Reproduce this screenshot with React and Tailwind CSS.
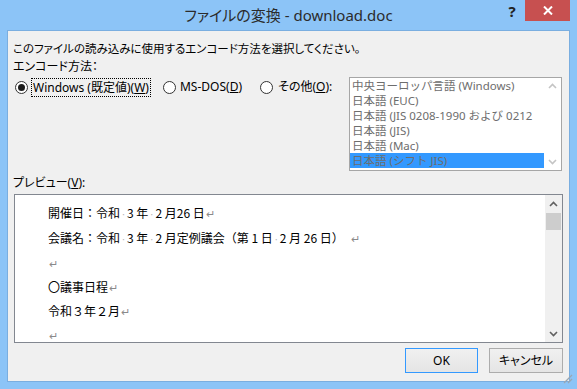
import React from "react";

const Chevron = ({ up, color = "#c4c4c4" }) => (
  <svg width="9" height="6" viewBox="0 0 9 6">
    <path d={up ? "M1 5 L4.5 1.5 L8 5" : "M1 1 L4.5 4.5 L8 1"} fill="none" stroke={color} strokeWidth="1.6" />
  </svg>
);

const Radio = ({ checked }) => (
  <div className="w-[13px] h-[13px] rounded-full border border-[#333333] bg-white flex items-center justify-center shrink-0">
    {checked && <div className="w-[7px] h-[7px] rounded-full bg-[#1c1c1c]" />}
  </div>
);

const Ret = () => <span className="text-[#8a8a8a] text-[11px] ml-[1px]">↵</span>;
const Sp = () => <span className="inline-block w-[7px] text-center text-[#b0b0b0] text-[9px]">·</span>;

const listItems = [
  "中央ヨーロッパ言語 (Windows)",
  "日本語 (EUC)",
  "日本語 (JIS 0208-1990 および 0212",
  "日本語 (JIS)",
  "日本語 (Mac)",
  "日本語 (シフト JIS)",
];

export default function App() {
  return (
    <div className="w-[577px] h-[389px] bg-[#8cc4f7] flex flex-col relative overflow-hidden font-['Noto_Sans','Noto_Sans_CJK_JP',sans-serif] text-black">
      {/* title bar */}
      <div className="h-[30px] grid grid-cols-[1fr_auto_1fr] shrink-0">
        <div />
        <div className="pt-[4px] text-[15px] leading-[22px] text-[#2b2b2b] whitespace-nowrap [font-feature-settings:'palt']">
          ファイルの変換 - download.doc
        </div>
        <div className="flex justify-end items-start pr-[7px]">
          <div className="w-[14px] mt-[2px] mr-[6px] text-[15px] leading-[18px] font-bold text-[#222] text-center">?</div>
          <div className="w-[45px] h-[21px] bg-[#c75050] flex items-center justify-center">
            <svg width="10" height="9" viewBox="0 0 10 9">
              <path d="M1 0.5 L9 8.5 M9 0.5 L1 8.5" stroke="white" strokeWidth="2" />
            </svg>
          </div>
        </div>
      </div>

      {/* client */}
      <div className="mx-[7px] mb-[7px] flex-1 border border-[#7aaee0] bg-[#f0f0f0] flex flex-col pl-[5px] pr-[6px] pt-[9px] text-[12px] [font-feature-settings:'palt']">
        <div className="h-[18px] leading-[18px] whitespace-nowrap text-[11.5px]">このファイルの読み込みに使用するエンコード方法を選択してください。</div>
        <div className="h-[18px] leading-[18px] whitespace-nowrap">エンコード方法：</div>

        <div className="flex mt-[1px]">
          <div className="flex items-center h-[20px]">
            <div className="ml-[2px]"><Radio checked /></div>
            <div className="ml-[3px] h-[19px] border border-dotted border-black px-[1px] leading-[17px] whitespace-nowrap">
              Windows (既定値)(<span className="underline">W</span>)
            </div>
            <div className="ml-[12px]"><Radio /></div>
            <div className="ml-[4px] whitespace-nowrap">MS-DOS(<span className="underline">D</span>)</div>
            <div className="ml-[18px]"><Radio /></div>
            <div className="ml-[5px] whitespace-nowrap">その他(<span className="underline">O</span>):</div>
          </div>

          <div className="ml-auto mr-[1px] w-[213px] h-[94px] border border-[#a6a6a6] bg-white flex">
            <div className="flex-1 flex flex-col overflow-hidden [font-feature-settings:normal]">
              {listItems.map((t, i) => (
                <div
                  key={i}
                  className={`h-[15px] leading-[15px] text-[11.5px] pl-[2px] whitespace-nowrap overflow-hidden text-[#6d6d6d] ${i === 5 ? "bg-[#3399ff]" : ""}`}
                >
                  {t}
                </div>
              ))}
            </div>
            <div className="w-[17px] flex flex-col items-center justify-between py-[5px]">
              <Chevron up />
              <Chevron />
            </div>
          </div>
        </div>

        <div className="mt-[3px] h-[18px] leading-[18px] whitespace-nowrap">
          プレビュー(<span className="underline">V</span>):
        </div>

        <div className="mt-[2px] ml-[1px] h-[149px] border border-[#828790] bg-white flex">
          <div className="flex-1 pl-[33px] pt-[6px] text-[12px] leading-[23px] font-['Noto_Sans_CJK_JP',sans-serif] [font-feature-settings:normal] whitespace-nowrap overflow-hidden">
            <div>開催日：令和<Sp />3 年<Sp />2 月26 日<Ret /></div>
            <div>会議名：令和<Sp />3 年<Sp />2 月定例議会（第 1 日<Sp />2 月 26 日）<span className="ml-[6px]" /><Ret /></div>
            <div><Ret /></div>
            <div>〇議事日程<Ret /></div>
            <div>令和３年２月<Ret /></div>
            <div><Ret /></div>
          </div>
          <div className="w-[17px] bg-[#f0f0f0] flex flex-col items-center">
            <div className="h-[17px] flex items-center justify-center"><Chevron up color="#606060" /></div>
            <div className="mt-[1px] w-[15px] h-[17px] bg-[#cdcdcd]" />
            <div className="flex-1" />
            <div className="h-[17px] flex items-center justify-center"><Chevron color="#606060" /></div>
          </div>
        </div>

        <div className="mt-[5px] flex justify-end gap-[11px]">
          <div className="w-[73px] h-[25px] border border-[#3399ff] bg-gradient-to-b from-[#f0f0f0] to-[#e5e5e5] flex items-center justify-center">OK</div>
          <div className="w-[74px] h-[25px] border border-[#acacac] bg-gradient-to-b from-[#f0f0f0] to-[#e5e5e5] flex items-center justify-center">キャンセル</div>
        </div>
      </div>

      {/* resize grip */}
      <svg className="absolute right-[4px] bottom-[5px]" width="12" height="12" viewBox="0 0 12 12">
        <path d="M11 3 L3 11 M11 7 L7 11 M11 11 L11 11" stroke="#9aa6b2" strokeWidth="1.2" />
      </svg>
    </div>
  );
}
